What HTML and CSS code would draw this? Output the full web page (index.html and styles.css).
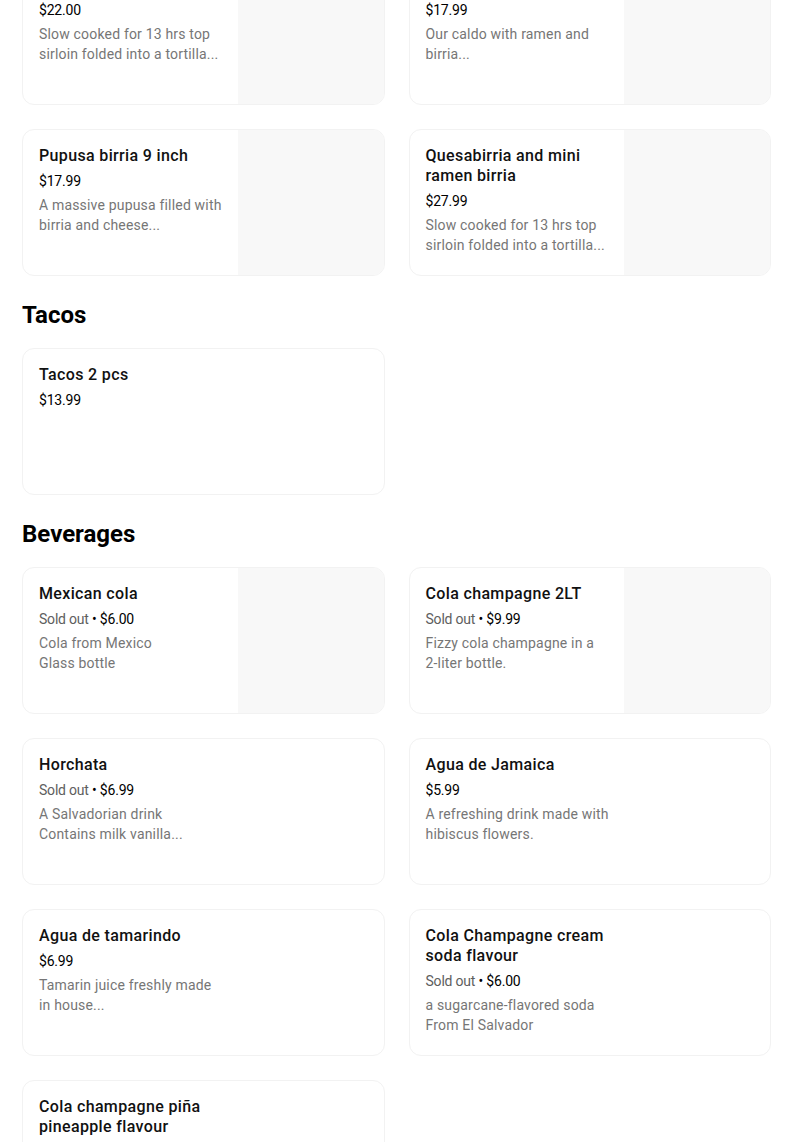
FILE: index.html
```html
<!DOCTYPE html>
<html lang="en">
<head>
<meta charset="utf-8">
<title>Menu</title>
<link rel="stylesheet" href="styles.css">
</head>
<body>
<main class="menu">
  <section class="category">
    <div class="grid">
      <div class="card">
        <div class="info">
          <div class="title">Quesabirria</div>
          <div class="price">$22.00</div>
          <div class="desc">Slow cooked for 13 hrs top<br>sirloin folded into a tortilla...</div>
        </div>
        <div class="thumb"></div>
      </div>
      <div class="card">
        <div class="info">
          <div class="title">Ramen birria</div>
          <div class="price">$17.99</div>
          <div class="desc">Our caldo with ramen and<br>birria...</div>
        </div>
        <div class="thumb"></div>
      </div>
      <div class="card">
        <div class="info">
          <div class="title">Pupusa birria 9 inch</div>
          <div class="price">$17.99</div>
          <div class="desc">A massive pupusa filled with<br>birria and cheese...</div>
        </div>
        <div class="thumb"></div>
      </div>
      <div class="card">
        <div class="info">
          <div class="title">Quesabirria and mini<br>ramen birria</div>
          <div class="price">$27.99</div>
          <div class="desc">Slow cooked for 13 hrs top<br>sirloin folded into a tortilla...</div>
        </div>
        <div class="thumb"></div>
      </div>
    </div>
  </section>

  <section class="category">
    <h2 class="cat-title">Tacos</h2>
    <div class="grid">
      <div class="card">
        <div class="info">
          <div class="title">Tacos 2 pcs</div>
          <div class="price">$13.99</div>
        </div>
      </div>
    </div>
  </section>

  <section class="category">
    <h2 class="cat-title">Beverages</h2>
    <div class="grid">
      <div class="card">
        <div class="info">
          <div class="title">Mexican cola</div>
          <div class="price"><span class="sold">Sold out</span> • $6.00</div>
          <div class="desc">Cola from Mexico<br>Glass bottle</div>
        </div>
        <div class="thumb"></div>
      </div>
      <div class="card">
        <div class="info">
          <div class="title">Cola champagne 2LT</div>
          <div class="price"><span class="sold">Sold out</span> • $9.99</div>
          <div class="desc">Fizzy cola champagne in a<br>2-liter bottle.</div>
        </div>
        <div class="thumb"></div>
      </div>
      <div class="card">
        <div class="info">
          <div class="title">Horchata</div>
          <div class="price"><span class="sold">Sold out</span> • $6.99</div>
          <div class="desc">A Salvadorian drink<br>Contains milk vanilla...</div>
        </div>
      </div>
      <div class="card">
        <div class="info">
          <div class="title">Agua de Jamaica</div>
          <div class="price">$5.99</div>
          <div class="desc">A refreshing drink made with<br>hibiscus flowers.</div>
        </div>
      </div>
      <div class="card">
        <div class="info">
          <div class="title">Agua de tamarindo</div>
          <div class="price">$6.99</div>
          <div class="desc">Tamarin juice freshly made<br>in house...</div>
        </div>
      </div>
      <div class="card">
        <div class="info">
          <div class="title">Cola Champagne cream<br>soda flavour</div>
          <div class="price"><span class="sold">Sold out</span> • $6.00</div>
          <div class="desc">a sugarcane-flavored soda<br>From El Salvador</div>
        </div>
      </div>
      <div class="card">
        <div class="info">
          <div class="title">Cola champagne piña<br>pineapple flavour</div>
          <div class="price">$6.00</div>
        </div>
      </div>
    </div>
  </section>
</main>
</body>
</html>
```
FILE: styles.css
```css
html, body {
  margin: 0;
  padding: 0;
  background: #ffffff;
}

body {
  font-family: "Roboto", "Liberation Sans", sans-serif;
  color: #000000;
  overflow: hidden;
}

.menu {
  width: 749px;
  margin: -42px 0 0 22px;
}

.cat-title {
  margin: 23px 0 17px;
  font-size: 24px;
  line-height: 32px;
  font-weight: 700;
  letter-spacing: 0;
}

.grid {
  display: grid;
  grid-template-columns: 1fr 1fr;
  column-gap: 24px;
  row-gap: 24px;
}

.card {
  display: flex;
  justify-content: space-between;
  height: 147px;
  box-sizing: border-box;
  border: 1px solid #f2f2f2;
  border-radius: 12px;
  overflow: hidden;
  background: #ffffff;
}

.info {
  flex: 0 0 214px;
  box-sizing: border-box;
  padding: 16px;
}

.title {
  font-size: 16px;
  line-height: 20px;
  font-weight: 500;
  letter-spacing: 0.35px;
  color: #111111;
  white-space: nowrap;
}

.price {
  margin-top: 5px;
  font-size: 14px;
  line-height: 20px;
  color: #000000;
  letter-spacing: -0.2px;
}

.sold {
  color: #5e5e5e;
}

.desc {
  margin-top: 4px;
  font-size: 14px;
  line-height: 20px;
  letter-spacing: 0.18px;
  color: #767676;
  white-space: nowrap;
}

.thumb {
  flex: 0 0 146px;
  background: #f8f8f8;
}
```
